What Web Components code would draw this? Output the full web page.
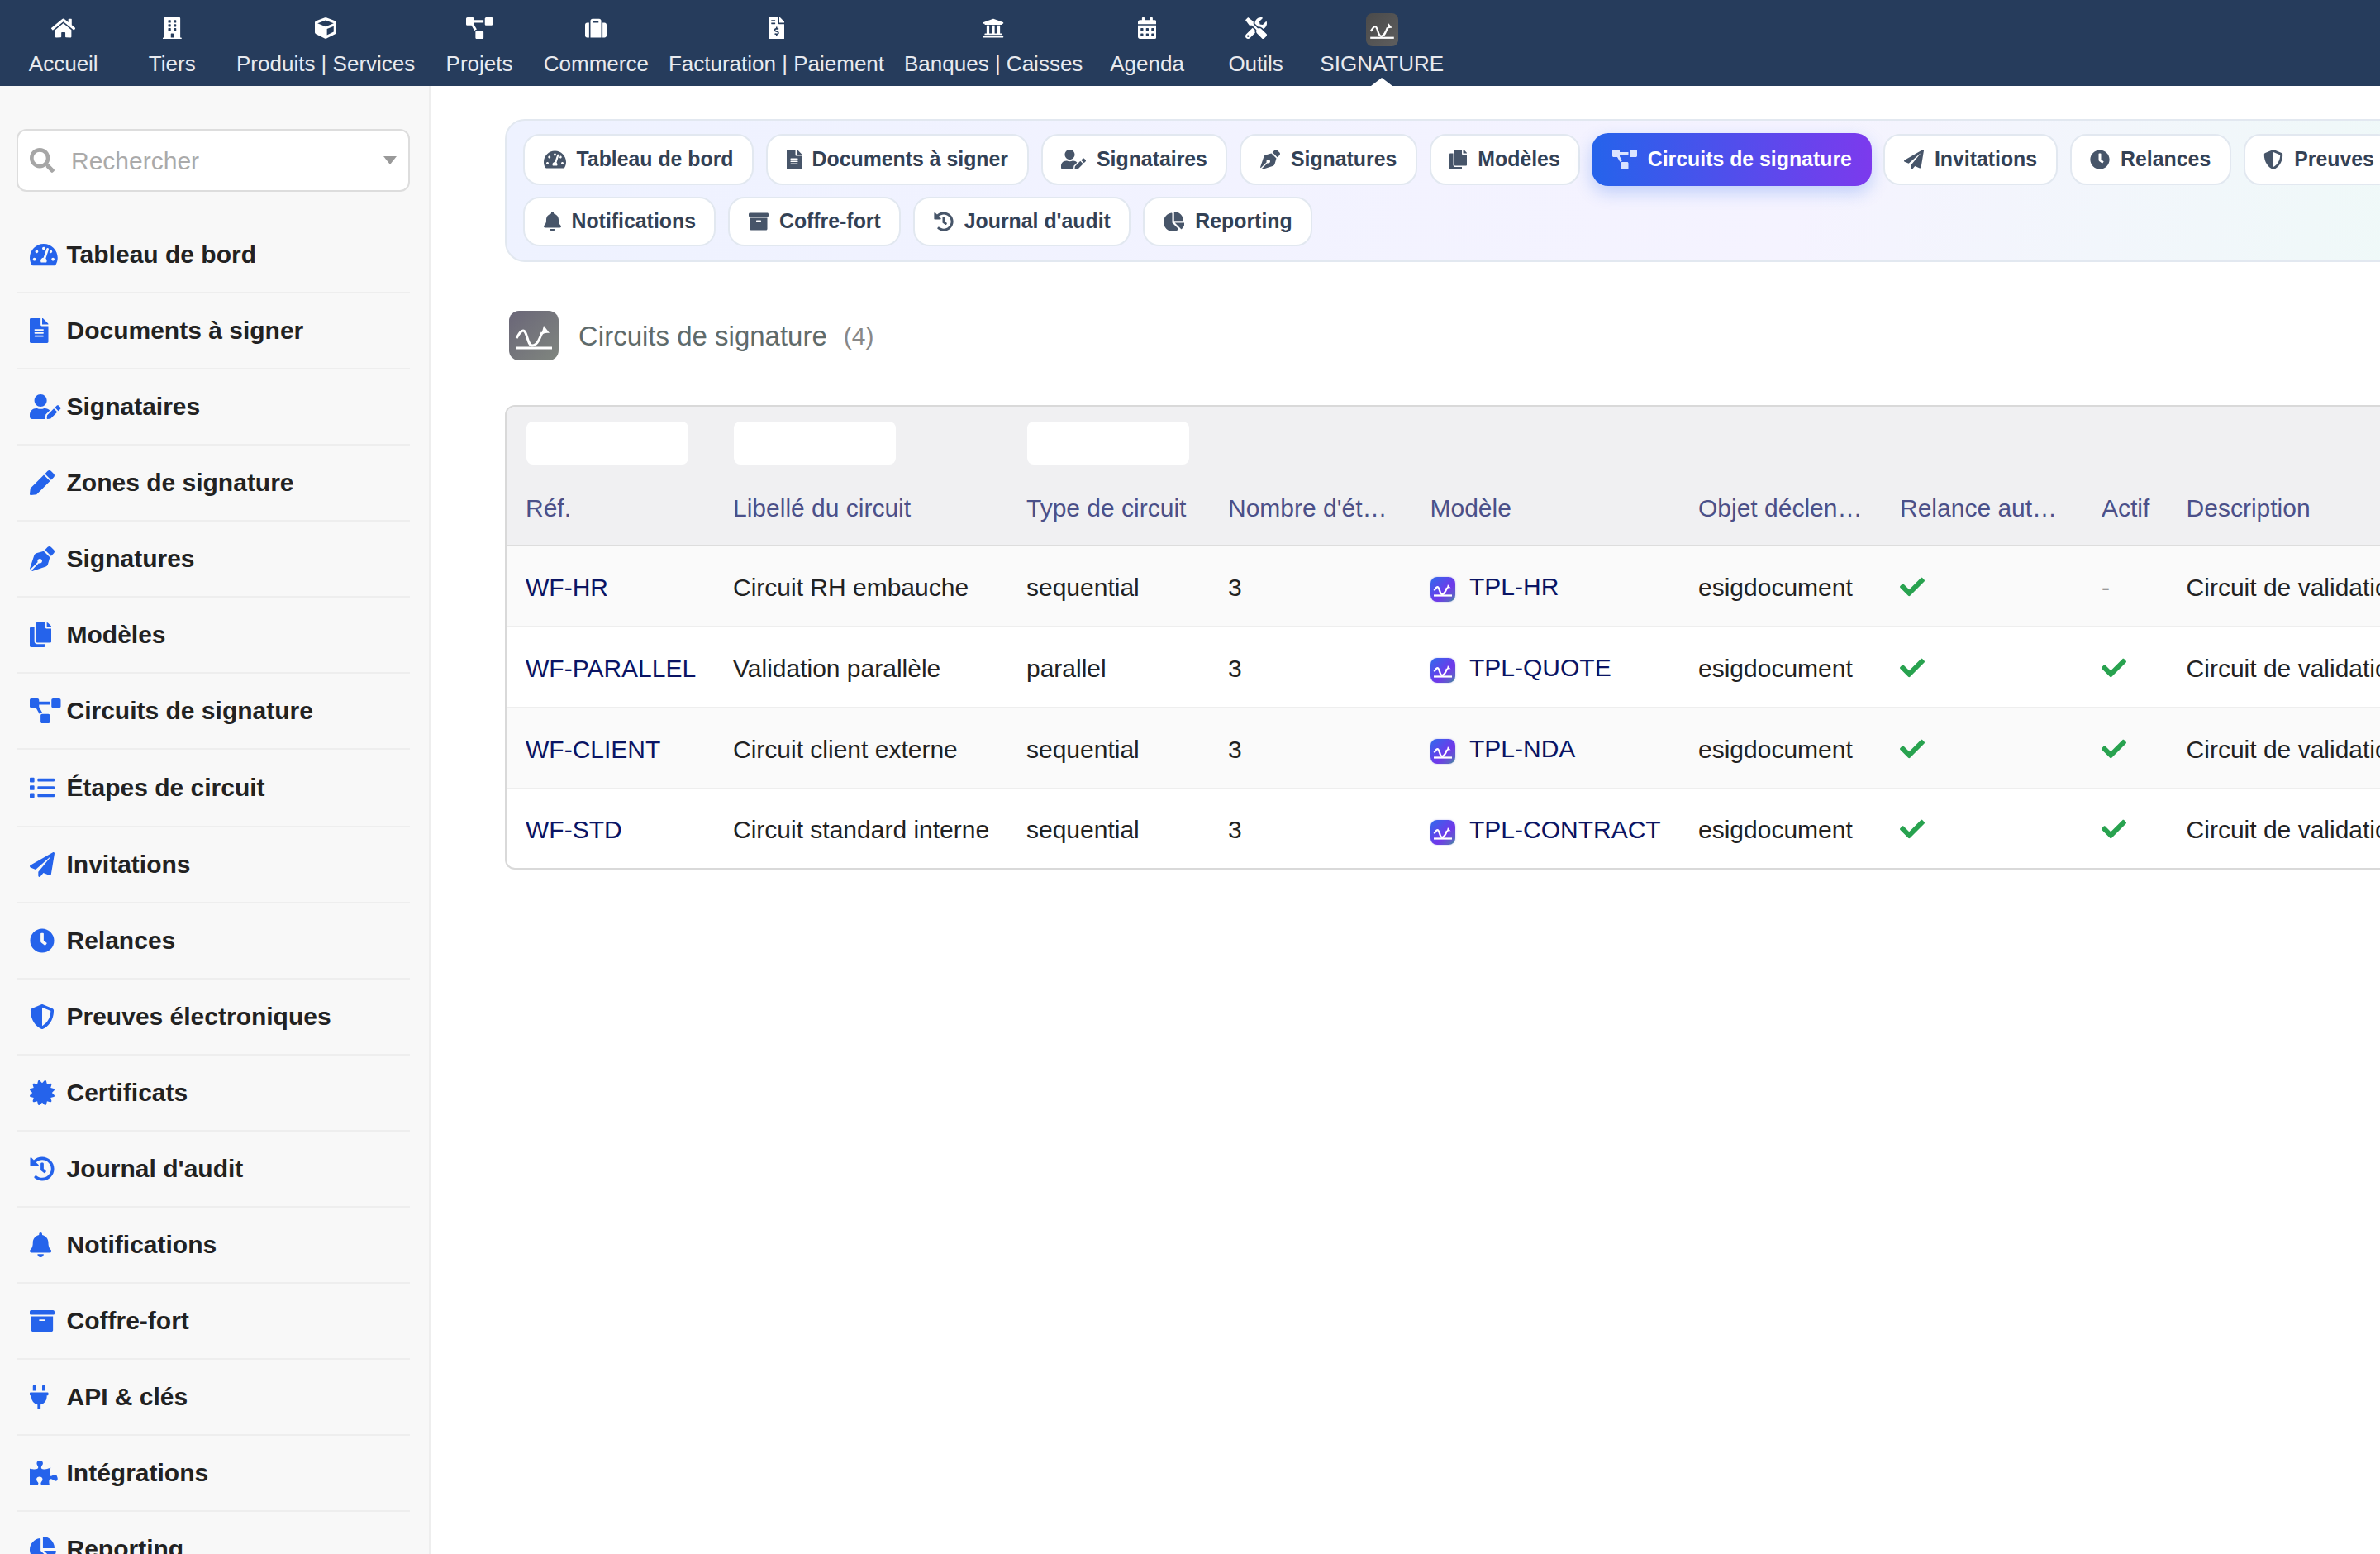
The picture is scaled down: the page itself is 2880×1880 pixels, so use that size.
<!DOCTYPE html>
<html lang="fr">
<head>
<meta charset="utf-8">
<title>Circuits de signature</title>
<style>
  html, body { margin: 0; padding: 0; height: 100%; background: #fff; }
  body { width: 2880px; height: 1880px; overflow: hidden; font-family: "Liberation Sans", Arial, sans-serif; display: flex; flex-direction: column; }
</style>
</head>
<body>
<top-nav>
  <nav-item icon="home">Accueil</nav-item>
  <nav-item icon="building">Tiers</nav-item>
  <nav-item icon="cube">Produits | Services</nav-item>
  <nav-item icon="diagram">Projets</nav-item>
  <nav-item icon="suitcase">Commerce</nav-item>
  <nav-item icon="invoice">Facturation | Paiement</nav-item>
  <nav-item icon="bank">Banques | Caisses</nav-item>
  <nav-item icon="calendar">Agenda</nav-item>
  <nav-item icon="tools">Outils</nav-item>
  <nav-item sign active>SIGNATURE</nav-item>
</top-nav>
<page-body>
  <side-menu>
    <side-item icon="gauge">Tableau de bord</side-item>
    <side-item icon="file">Documents à signer</side-item>
    <side-item icon="useredit">Signataires</side-item>
    <side-item icon="pen">Zones de signature</side-item>
    <side-item icon="nib">Signatures</side-item>
    <side-item icon="copy">Modèles</side-item>
    <side-item icon="diagram">Circuits de signature</side-item>
    <side-item icon="list" tall>Étapes de circuit</side-item>
    <side-item icon="plane">Invitations</side-item>
    <side-item icon="clock">Relances</side-item>
    <side-item icon="shield">Preuves électroniques</side-item>
    <side-item icon="cert">Certificats</side-item>
    <side-item icon="history">Journal d'audit</side-item>
    <side-item icon="bell">Notifications</side-item>
    <side-item icon="archive">Coffre-fort</side-item>
    <side-item icon="plug">API &amp; clés</side-item>
    <side-item icon="puzzle">Intégrations</side-item>
    <side-item icon="pie">Reporting</side-item>
  </side-menu>
  <main-area>
    <tab-strip>
      <tab-pill icon="gauge">Tableau de bord</tab-pill>
      <tab-pill icon="file">Documents à signer</tab-pill>
      <tab-pill icon="useredit">Signataires</tab-pill>
      <tab-pill icon="nib">Signatures</tab-pill>
      <tab-pill icon="copy">Modèles</tab-pill>
      <tab-pill icon="diagram" active>Circuits de signature</tab-pill>
      <tab-pill icon="plane">Invitations</tab-pill>
      <tab-pill icon="clock">Relances</tab-pill>
      <tab-pill icon="shield">Preuves</tab-pill>
      <tab-pill icon="bell" slot="second">Notifications</tab-pill>
      <tab-pill icon="archive" slot="second">Coffre-fort</tab-pill>
      <tab-pill icon="history" slot="second">Journal d'audit</tab-pill>
      <tab-pill icon="pie" slot="second">Reporting</tab-pill>
    </tab-strip>
    <page-title count="(4)">Circuits de signature</page-title>
    <circuit-table></circuit-table>
  </main-area>
</page-body>

<script>
// FontAwesome 5 solid shapes, [width, path], all on a 512 high box
const ICONS = {
  home: [576, 'M280.37 148.26L96 300.11V464a16 16 0 0 0 16 16l112.06-.29a16 16 0 0 0 15.92-16V368a16 16 0 0 1 16-16h64a16 16 0 0 1 16 16v95.64a16 16 0 0 0 16 16.05L464 480a16 16 0 0 0 16-16V300L295.67 148.26a12.19 12.19 0 0 0-15.3 0zM571.6 251.47L488 182.56V44.05a12 12 0 0 0-12-12h-56a12 12 0 0 0-12 12v72.61L318.47 43a48 48 0 0 0-61 0L4.34 251.47a12 12 0 0 0-1.6 16.9l25.5 31A12 12 0 0 0 45.15 301l235.22-193.74a12.19 12.19 0 0 1 15.3 0L530.9 301a12 12 0 0 0 16.9-1.6l25.5-31a12 12 0 0 0-1.7-16.93z'],
  building: [448, 'M436 480h-20V24c0-13.255-10.745-24-24-24H56C42.745 0 32 10.745 32 24v456H12c-6.627 0-12 5.373-12 12v20h448v-20c0-6.627-5.373-12-12-12zM128 76c0-6.627 5.373-12 12-12h40c6.627 0 12 5.373 12 12v40c0 6.627-5.373 12-12 12h-40c-6.627 0-12-5.373-12-12V76zm0 96c0-6.627 5.373-12 12-12h40c6.627 0 12 5.373 12 12v40c0 6.627-5.373 12-12 12h-40c-6.627 0-12-5.373-12-12v-40zm52 148h-40c-6.627 0-12-5.373-12-12v-40c0-6.627 5.373-12 12-12h40c6.627 0 12 5.373 12 12v40c0 6.627-5.373 12-12 12zm76 160h-64v-84c0-6.627 5.373-12 12-12h40c6.627 0 12 5.373 12 12v84zm64-172c0 6.627-5.373 12-12 12h-40c-6.627 0-12-5.373-12-12v-40c0-6.627 5.373-12 12-12h40c6.627 0 12 5.373 12 12v40zm0-96c0 6.627-5.373 12-12 12h-40c-6.627 0-12-5.373-12-12v-40c0-6.627 5.373-12 12-12h40c6.627 0 12 5.373 12 12v40zm0-96c0 6.627-5.373 12-12 12h-40c-6.627 0-12-5.373-12-12V76c0-6.627 5.373-12 12-12h40c6.627 0 12 5.373 12 12v40z'],
  cube: [512, 'M239.1 6.3l-208 78c-18.7 7-31.1 25-31.1 45v225.1c0 18.2 10.3 34.8 26.5 42.9l208 104c13.5 6.8 29.4 6.8 42.9 0l208-104c16.3-8.1 26.5-24.8 26.5-42.9V129.3c0-20-12.4-37.9-31.1-44.9l-208-78C262 2.2 250 2.2 239.1 6.3zM256 68.4l192 72v1.1l-192 78-192-78v-1.1l192-72zm32 356V275.5l160-65v133.9l-160 80z'],
  diagram: [640, 'M384 320H256c-17.67 0-32 14.33-32 32v128c0 17.67 14.33 32 32 32h128c17.67 0 32-14.33 32-32V352c0-17.67-14.33-32-32-32zM192 32c0-17.67-14.33-32-32-32H32C14.33 0 0 14.33 0 32v128c0 17.67 14.33 32 32 32h95.72l73.16 128.04C211.98 300.98 232.4 288 256 288h.28L192 175.51V128h224V64H192V32zM608 0H480c-17.67 0-32 14.33-32 32v128c0 17.67 14.33 32 32 32h128c17.67 0 32-14.33 32-32V32c0-17.67-14.33-32-32-32z'],
  suitcase: [512, 'M128 480h256V80c0-26.5-21.5-48-48-48H176c-26.5 0-48 21.5-48 48v400zm64-384h128v32H192V96zm320 80v256c0 26.5-21.5 48-48 48h-48V128h48c26.5 0 48 21.5 48 48zM96 480H48c-26.5 0-48-21.5-48-48V176c0-26.5 21.5-48 48-48h48v352z'],
  invoice: [384, 'M377 105L279.1 7c-4.5-4.5-10.6-7-17-7H256v128h128v-6.1c0-6.3-2.5-12.4-7-16.9zm-153 31V0H24C10.7 0 0 10.7 0 24v464c0 13.3 10.7 24 24 24h336c13.3 0 24-10.7 24-24V160H248c-13.2 0-24-10.8-24-24zM64 72c0-4.42 3.58-8 8-8h80c4.42 0 8 3.58 8 8v16c0 4.42-3.58 8-8 8H72c-4.42 0-8-3.58-8-8V72zm0 80v-16c0-4.42 3.58-8 8-8h80c4.42 0 8 3.58 8 8v16c0 4.42-3.58 8-8 8H72c-4.42 0-8-3.58-8-8zm144 263.88V440c0 4.42-3.58 8-8 8h-16c-4.42 0-8-3.58-8-8v-24.29c-11.29-.58-22.27-4.52-31.37-11.35-3.9-2.93-4.1-8.77-.57-12.14l11.75-11.21c2.77-2.64 6.89-2.76 10.13-.73 3.87 2.42 8.26 3.72 12.82 3.72h28.11c6.5 0 11.8-5.92 11.8-13.19 0-5.95-3.61-11.19-8.77-12.73l-45-13.5c-18.59-5.58-31.58-23.42-31.58-43.39 0-24.52 19.05-44.44 42.67-45.07V232c0-4.42 3.58-8 8-8h16c4.42 0 8 3.58 8 8v24.29c11.29.58 22.27 4.51 31.37 11.35 3.9 2.93 4.1 8.77.57 12.14l-11.75 11.21c-2.77 2.64-6.89 2.76-10.13.73-3.87-2.43-8.26-3.72-12.82-3.72h-28.11c-6.5 0-11.8 5.92-11.8 13.19 0 5.95 3.61 11.19 8.77 12.73l45 13.5c18.59 5.58 31.58 23.42 31.58 43.39 0 24.53-19.05 44.44-42.67 45.07z'],
  bank: [512, 'M496 128v16a8 8 0 0 1-8 8h-24v12c0 6.627-5.373 12-12 12H60c-6.627 0-12-5.373-12-12v-12H24a8 8 0 0 1-8-8v-16a8 8 0 0 1 4.941-7.392l232-88a7.996 7.996 0 0 1 6.118 0l232 88A8 8 0 0 1 496 128zm-24 304H40c-13.255 0-24 10.745-24 24v16a8 8 0 0 0 8 8h464a8 8 0 0 0 8-8v-16c0-13.255-10.745-24-24-24zM96 192v192H60c-6.627 0-12 5.373-12 12v20h416v-20c0-6.627-5.373-12-12-12h-36V192h-64v192h-64V192h-64v192h-64V192H96z'],
  calendar: [448, 'M0 464c0 26.5 21.5 48 48 48h352c26.5 0 48-21.5 48-48V192H0v272zm320-196c0-6.6 5.4-12 12-12h40c6.6 0 12 5.4 12 12v40c0 6.6-5.4 12-12 12h-40c-6.6 0-12-5.4-12-12v-40zm0 128c0-6.6 5.4-12 12-12h40c6.6 0 12 5.4 12 12v40c0 6.6-5.4 12-12 12h-40c-6.6 0-12-5.4-12-12v-40zM192 268c0-6.6 5.4-12 12-12h40c6.6 0 12 5.4 12 12v40c0 6.6-5.4 12-12 12h-40c-6.6 0-12-5.4-12-12v-40zm0 128c0-6.6 5.4-12 12-12h40c6.6 0 12 5.4 12 12v40c0 6.6-5.4 12-12 12h-40c-6.6 0-12-5.4-12-12v-40zM64 268c0-6.6 5.4-12 12-12h40c6.6 0 12 5.4 12 12v40c0 6.6-5.4 12-12 12H76c-6.6 0-12-5.4-12-12v-40zm0 128c0-6.6 5.4-12 12-12h40c6.6 0 12 5.4 12 12v40c0 6.6-5.4 12-12 12H76c-6.6 0-12-5.4-12-12v-40zM400 64h-48V16c0-8.8-7.2-16-16-16h-32c-8.8 0-16 7.2-16 16v48H160V16c0-8.8-7.2-16-16-16h-32c-8.8 0-16 7.2-16 16v48H48C21.5 64 0 85.5 0 112v48h448v-48c0-26.5-21.5-48-48-48z'],
  tools: [512, 'M501.1 395.7L384 278.6c-23.1-23.1-57.6-27.6-85.4-13.9L192 158.1V96L64 0 0 64l96 128h62.1l106.6 106.6c-13.6 27.8-9.2 62.3 13.9 85.4l117.1 117.1c14.6 14.6 38.2 14.6 52.7 0l52.7-52.7c14.5-14.6 14.5-38.2 0-52.7zM331.7 225c28.3 0 54.9 11 74.9 31l19.4 19.4c15.8-6.9 30.8-16.5 43.8-29.5 37.1-37.1 49.7-89.3 37.9-136.7-2.2-9-13.5-12.1-20.1-5.5l-74.4 74.4-67.9-11.3L334 98.9l74.4-74.4c6.6-6.6 3.4-17.9-5.7-20.2-47.4-11.7-99.6.9-136.6 37.9-28.5 28.5-41.9 66.1-41.2 103.6l82.1 82.1c8.1-1.9 16.5-2.9 24.7-2.9zm-103.9 82l-56.7-56.7L18.7 402.8c-25 25-25 65.5 0 90.5s65.5 25 90.5 0l123.6-123.6c-7.6-19.9-9.9-41.6-5-62.7zM64 472c-13.2 0-24-10.8-24-24 0-13.3 10.7-24 24-24s24 10.7 24 24c0 13.2-10.7 24-24 24z'],
  gauge: [576, 'M288 32C128.94 32 0 160.94 0 320c0 52.8 14.25 102.26 39.06 144.8 5.61 9.62 16.3 15.2 27.44 15.2h443c11.14 0 21.83-5.58 27.44-15.2C561.75 422.26 576 372.8 576 320c0-159.06-128.94-288-288-288zm0 64c14.71 0 26.58 10.13 30.32 23.65-1.11 2.26-2.64 4.23-3.45 6.67l-9.22 27.67c-5.13 3.49-10.97 6.01-17.64 6.01-17.67 0-32-14.33-32-32S270.33 96 288 96zM96 384c-17.67 0-32-14.33-32-32s14.33-32 32-32 32 14.33 32 32-14.33 32-32 32zm48-160c-17.67 0-32-14.33-32-32s14.33-32 32-32 32 14.33 32 32-14.33 32-32 32zm246.77-72.41l-61.33 184C343.13 347.33 352 364.54 352 384c0 11.72-3.38 22.55-8.88 32H232.88c-5.5-9.45-8.88-20.28-8.88-32 0-33.94 26.5-61.43 59.9-63.59l61.34-184.01c4.17-12.56 17.73-19.45 30.36-15.17 12.57 4.19 19.35 17.79 15.17 30.36zm14.66 57.2l15.52-46.55c3.47-1.29 7.13-2.23 11.05-2.23 17.67 0 32 14.33 32 32s-14.33 32-32 32c-11.38-.01-20.89-6.28-26.57-15.22zM480 384c-17.67 0-32-14.33-32-32s14.33-32 32-32 32 14.33 32 32-14.33 32-32 32z'],
  file: [384, 'M224 136V0H24C10.7 0 0 10.7 0 24v464c0 13.3 10.7 24 24 24h336c13.3 0 24-10.7 24-24V160H248c-13.2 0-24-10.8-24-24zm64 236c0 6.6-5.4 12-12 12H108c-6.6 0-12-5.4-12-12v-8c0-6.6 5.4-12 12-12h168c6.6 0 12 5.4 12 12v8zm0-64c0 6.6-5.4 12-12 12H108c-6.6 0-12-5.4-12-12v-8c0-6.6 5.4-12 12-12h168c6.6 0 12 5.4 12 12v8zm0-72v8c0 6.6-5.4 12-12 12H108c-6.6 0-12-5.4-12-12v-8c0-6.6 5.4-12 12-12h168c6.6 0 12 5.4 12 12zm96-114.1v6.1H256V0h6.1c6.4 0 12.5 2.5 17 7l97.9 98c4.5 4.5 7 10.6 7 16.9z'],
  useredit: [640, 'M224 256c70.7 0 128-57.3 128-128S294.7 0 224 0 96 57.3 96 128s57.3 128 128 128zm89.6 32h-16.7c-22.2 10.2-46.9 16-72.9 16s-50.6-5.8-72.9-16h-16.7C60.2 288 0 348.2 0 422.4V464c0 26.5 21.5 48 48 48h274.9c-2.4-6.8-3.4-14-2.6-21.3l6.8-60.9 1.2-11.1 7.9-7.9 77.3-77.3c-24.5-27.7-60-45.5-99.9-45.5zm45.3 145.3l-6.8 61c-1.1 10.2 7.5 18.8 17.6 17.6l60.9-6.8 137.9-137.9-71.7-71.7-137.9 137.8zM633 268.9L595.1 231c-9.3-9.3-24.5-9.3-33.8 0l-37.8 37.8-4.1 4.1 71.8 71.7 41.8-41.8c9.3-9.4 9.3-24.5 0-33.9z'],
  pen: [512, 'M290.74 93.24l128.02 128.02-277.99 277.99-114.14 12.6C11.35 513.54-1.56 500.62.14 485.34l12.7-114.22 277.9-277.88zm207.2-19.06l-60.11-60.11c-18.75-18.75-49.16-18.75-67.91 0l-56.55 56.55 128.02 128.02 56.55-56.55c18.75-18.76 18.75-49.16 0-67.91z'],
  nib: [512, 'M136.6 138.79a64.003 64.003 0 0 0-43.31 41.35L0 460l14.69 14.69L164.8 324.58c-2.99-6.26-4.8-13.18-4.8-20.58 0-26.51 21.49-48 48-48s48 21.49 48 48-21.49 48-48 48c-7.4 0-14.32-1.81-20.58-4.8L37.31 497.31 52 512l279.86-93.29a64.003 64.003 0 0 0 41.35-43.31L416 224 288 96l-151.4 42.79zm361.34-64.62l-60.11-60.11c-18.75-18.75-49.16-18.75-67.91 0l-56.55 56.55 128.02 128.02 56.55-56.55c18.75-18.75 18.75-49.15 0-67.91z'],
  copy: [448, 'M320 448v40c0 13.255-10.745 24-24 24H24c-13.255 0-24-10.745-24-24V120c0-13.255 10.745-24 24-24h72v296c0 30.879 25.121 56 56 56h168zm0-344V0H152c-13.255 0-24 10.745-24 24v368c0 13.255 10.745 24 24 24h272c13.255 0 24-10.745 24-24V128H344c-13.2 0-24-10.8-24-24zm120.971-31.029L375.029 7.029A24 24 0 0 0 358.059 0H352v96h96v-6.059a24 24 0 0 0-7.029-16.97z'],
  list: [512, 'M80 368H16a16 16 0 0 0-16 16v64a16 16 0 0 0 16 16h64a16 16 0 0 0 16-16v-64a16 16 0 0 0-16-16zm0-320H16A16 16 0 0 0 0 64v64a16 16 0 0 0 16 16h64a16 16 0 0 0 16-16V64a16 16 0 0 0-16-16zm0 160H16a16 16 0 0 0-16 16v64a16 16 0 0 0 16 16h64a16 16 0 0 0 16-16v-64a16 16 0 0 0-16-16zm416 176H176a16 16 0 0 0-16 16v32a16 16 0 0 0 16 16h320a16 16 0 0 0 16-16v-32a16 16 0 0 0-16-16zm0-320H176a16 16 0 0 0-16 16v32a16 16 0 0 0 16 16h320a16 16 0 0 0 16-16V80a16 16 0 0 0-16-16zm0 160H176a16 16 0 0 0-16 16v32a16 16 0 0 0 16 16h320a16 16 0 0 0 16-16v-32a16 16 0 0 0-16-16z'],
  plane: [512, 'M476 3.2L12.5 270.6c-18.1 10.4-15.8 35.6 2.2 43.2L121 358.4l287.3-253.2c5.5-4.9 13.3 2.6 8.6 8.3L176 407v80.5c0 23.6 28.5 32.9 42.5 15.8L282 426l124.6 52.2c14.2 6 30.4-2.9 33-18.2l72-432C515 7.8 493.3-6.8 476 3.2z'],
  clock: [512, 'M256,8C119,8,8,119,8,256S119,504,256,504,504,393,504,256,393,8,256,8Zm92.49,313h0l-20,25a16,16,0,0,1-22.49,2.5h0l-67-49.72a40,40,0,0,1-15-31.23V112a16,16,0,0,1,16-16h32a16,16,0,0,1,16,16V256l58,42.5A16,16,0,0,1,348.49,321Z'],
  shield: [512, 'M466.5 83.7l-192-80a48.15 48.15 0 0 0-36.9 0l-192 80C27.7 91.1 16 108.6 16 128c0 198.5 114.5 335.7 221.5 380.3 11.8 4.9 25.1 4.9 36.9 0C360.1 472.6 496 349.3 496 128c0-19.4-11.7-36.9-29.5-44.3zM256.1 446.3l-.1-381 175.9 73.3c-3.3 151.4-82.1 261.1-175.8 307.7z'],
  cert: [512, 'M458.622 255.92l45.985-45.005c13.708-12.977 7.316-36.039-10.664-40.339l-62.65-15.99 17.661-62.015c4.991-17.838-11.829-34.663-29.661-29.671l-61.994 17.667-15.984-62.671C337.085.197 313.765-6.276 300.99 7.228L256 53.57 211.011 7.229c-12.63-13.351-36.047-7.234-40.325 10.668l-15.984 62.671-61.995-17.667C74.87 57.907 58.056 74.738 63.046 92.572l17.661 62.015-62.65 15.99C.069 174.878-6.31 197.944 7.392 210.915l45.985 45.005-45.985 45.004c-13.708 12.977-7.316 36.039 10.664 40.339l62.65 15.99-17.661 62.015c-4.991 17.838 11.829 34.663 29.661 29.671l61.994-17.667 15.984 62.671c4.439 18.575 27.696 24.018 40.325 10.668L256 458.61l44.989 46.001c12.5 13.488 35.987 7.486 40.325-10.668l15.984-62.671 61.994 17.667c17.836 4.994 34.651-11.837 29.661-29.671l-17.661-62.015 62.65-15.99c17.987-4.302 24.366-27.367 10.664-40.339l-45.984-45.004z'],
  history: [512, 'M504 255.531c.253 136.64-111.18 248.372-247.82 248.468-59.015.042-113.223-20.53-155.822-54.911-11.077-8.94-11.905-25.541-1.839-35.607l11.267-11.267c8.609-8.609 22.353-9.551 31.891-1.984C173.062 425.135 212.781 440 256 440c101.705 0 184-82.311 184-184 0-101.705-82.311-184-184-184-48.814 0-93.149 18.969-126.068 49.932l50.754 50.754c10.08 10.08 2.941 27.314-11.313 27.314H24c-8.837 0-16-7.163-16-16V38.627c0-14.254 17.234-21.393 27.314-11.314l49.372 49.372C129.209 34.136 189.552 8 256 8c136.81 0 247.747 110.78 248 247.531zm-180.912 78.784l9.823-12.63c8.138-10.463 6.253-25.542-4.21-33.679L288 256.349V152c0-13.255-10.745-24-24-24h-16c-13.255 0-24 10.745-24 24v135.651l65.409 50.874c10.463 8.137 25.541 6.253 33.679-4.21z'],
  bell: [448, 'M224 512c35.32 0 63.97-28.65 63.97-64H160.03c0 35.35 28.65 64 63.97 64zm215.39-149.71c-19.32-20.76-55.47-51.99-55.47-154.29 0-77.7-54.48-139.9-127.94-155.16V32c0-17.67-14.32-32-31.98-32s-31.98 14.33-31.98 32v20.84C118.56 68.1 64.08 130.3 64.08 208c0 102.3-36.15 133.53-55.47 154.29-6 6.45-8.66 14.16-8.61 21.71.11 16.4 12.98 32 32.1 32h383.8c19.12 0 32-15.6 32.1-32 .05-7.55-2.61-15.27-8.61-21.71z'],
  archive: [512, 'M32 448c0 17.7 14.3 32 32 32h384c17.7 0 32-14.3 32-32V160H32v288zm160-212c0-6.6 5.4-12 12-12h104c6.6 0 12 5.4 12 12v8c0 6.6-5.4 12-12 12H204c-6.6 0-12-5.4-12-12v-8zM480 32H32C14.3 32 0 46.3 0 64v48c0 8.8 7.2 16 16 16h480c8.8 0 16-7.2 16-16V64c0-17.7-14.3-32-32-32z'],
  plug: [384, 'M320,32a32,32,0,0,0-64,0v96h64Zm48,128H16A16,16,0,0,0,0,176v32a16,16,0,0,0,16,16H32v32A160.07,160.07,0,0,0,160,412.8V512h64V412.8A160.07,160.07,0,0,0,352,256V224h16a16,16,0,0,0,16-16V176A16,16,0,0,0,368,160ZM128,32a32,32,0,0,0-64,0v96h64Z'],
  puzzle: [576, 'M519.442 288.651c-41.519 0-59.5 31.593-82.058 31.593C377.409 320.244 432 144 432 144s-196.288 80-196.288-3.297c0-35.827 36.288-46.25 36.288-85.985C272 19.216 243.885 0 210.539 0c-34.654 0-66.366 18.891-66.366 56.346 0 41.364 31.711 59.277 31.711 81.75C175.885 207.719 0 166.758 0 166.758v333.237s178.635 41.047 178.635-28.662c0-22.473-40-40.107-40-81.471 0-37.456 29.25-56.346 63.577-56.346 33.673 0 61.788 19.216 61.788 54.717 0 39.735-36.288 50.158-36.288 85.985 0 60.803 129.675 25.73 181.23 25.73 0 0-34.725-120.101 25.827-120.101 35.962 0 46.222 36.152 86.002 36.152C544.712 433.999 576 409.887 576 376.54c0-34.654-18.891-87.889-56.558-87.889z'],
  pie: [544, 'M527.79 288H290.5l158.03 158.03c6.04 6.04 15.98 6.53 22.19.68 38.7-36.46 65.32-85.61 73.13-140.86 1.34-9.46-6.51-17.85-16.06-17.85zm-15.83-64.8C503.72 103.74 408.26 8.28 288.8.04 279.68-.59 272 7.1 272 16.24V240h223.77c9.14 0 16.82-7.68 16.19-16.8zM224 288V50.71c0-9.55-8.39-17.4-17.84-16.06C86.99 51.49-4.1 155.6.14 280.37 4.5 408.51 114.83 513.59 243.03 511.98c50.4-.63 96.97-16.87 135.26-44.03 7.9-5.6 8.42-17.23 1.57-24.08L224 288z'],
  search: [512, 'M505 442.7L405.3 343c-4.5-4.5-10.6-7-17-7H372c27.6-35.3 44-79.7 44-128C416 93.1 322.9 0 208 0S0 93.1 0 208s93.1 208 208 208c48.3 0 92.7-16.4 128-44v16.3c0 6.4 2.5 12.5 7 17l99.7 99.7c9.4 9.4 24.6 9.4 33.9 0l28.3-28.3c9.4-9.4 9.4-24.6.1-34zM208 336c-70.7 0-128-57.2-128-128 0-70.7 57.2-128 128-128 70.7 0 128 57.2 128 128 0 70.7-57.2 128-128 128z'],
  check: [512, 'M173.898 439.404l-166.4-166.4c-9.997-9.997-9.997-26.206 0-36.204l36.203-36.204c9.997-9.998 26.207-9.998 36.204 0L192 312.69 432.095 72.596c9.997-9.997 26.207-9.997 36.204 0l36.203 36.204c9.997 9.997 9.997 26.206 0 36.204l-294.4 294.401c-9.998 9.997-26.207 9.997-36.204-.001z']
};

class FaIcon extends HTMLElement {
  connectedCallback() {
    const [w, d] = ICONS[this.getAttribute('name')];
    this.attachShadow({ mode: 'open' });
    this.shadowRoot.innerHTML = `
      <style>
        :host { display: inline-flex; flex: none; line-height: 0; }
        svg { height: var(--icon-size, 1em); width: auto; fill: currentColor; display: block; }
      </style>
      <svg viewBox="0 0 ${w} 512"><path d="${d}"/></svg>`;
  }
}
customElements.define('fa-icon', FaIcon);

// the signature mark used for the module, the page title and the template cells
class SignMark extends HTMLElement {
  constructor() {
    super();
    this.attachShadow({ mode: 'open' });
    this.shadowRoot.innerHTML = `
      <style>
        :host { display: inline-flex; flex: none; width: 60px; height: 60px; border-radius: 20%; background: linear-gradient(135deg, #6a6678, #80867f); }
        svg { width: 100%; height: 100%; display: block; }
        .s { stroke-width: var(--mark-stroke, 3); }
      </style>
      <svg viewBox="0 0 60 60" fill="none" stroke="#fff">
        <path class="s" d="M8 45H52"/>
        <path class="s" d="M9 33C12 28 14 24 17 24C22 24 22 42 28 42C34 42 37 34 40 26"/>
        <path d="M42 18L49 27C45 26 42 27 38 30C40 26 41 22 42 18Z" fill="#fff" stroke="none"/>
      </svg>`;
  }
}
customElements.define('sign-mark', SignMark);

class TopNav extends HTMLElement {
  constructor() {
    super();
    this.attachShadow({ mode: 'open' });
    this.shadowRoot.innerHTML = `
      <style>
        :host { display: flex; flex: none; height: 104px; padding-left: 11px; background: #263c5c; }
      </style>
      <slot></slot>`;
  }
}
customElements.define('top-nav', TopNav);

class NavItem extends HTMLElement {
  connectedCallback() {
    const sign = this.hasAttribute('sign');
    const icon = sign ? '<sign-mark class="sm"></sign-mark>' : `<fa-icon name="${this.getAttribute('icon')}"></fa-icon>`;
    this.attachShadow({ mode: 'open' });
    this.shadowRoot.innerHTML = `
      <style>
        :host { position: relative; display: flex; flex-direction: column; align-items: center; box-sizing: border-box; min-width: 131.5px; padding: 14px 12px 0; color: #e8eaef; font-size: 26px; white-space: nowrap; }
        .ic { height: 40px; display: flex; align-items: center; justify-content: center; color: #fff; --icon-size: 26px; }
        .sm { width: 39px; height: 40px; margin-top: 4px; background: linear-gradient(135deg, #4a4a4a, #5e5e5e); --mark-stroke: 3.5; }
        .lb { margin-top: 6px; line-height: 34px; }
        :host([active])::after { content: ""; position: absolute; left: 50%; bottom: 0; margin-left: -13px; border: 13px solid transparent; border-top: 0; border-bottom: 10px solid #fff; }
      </style>
      <div class="ic">${icon}</div>
      <div class="lb"><slot></slot></div>`;
  }
}
customElements.define('nav-item', NavItem);

class PageBody extends HTMLElement {
  constructor() {
    super();
    this.attachShadow({ mode: 'open' });
    this.shadowRoot.innerHTML = `
      <style>
        :host { display: flex; flex: 1; min-height: 0; overflow: hidden; }
      </style>
      <slot></slot>`;
  }
}
customElements.define('page-body', PageBody);

class SideMenu extends HTMLElement {
  constructor() {
    super();
    this.attachShadow({ mode: 'open' });
    this.shadowRoot.innerHTML = `
      <style>
        :host { display: block; flex: none; box-sizing: border-box; width: 521px; padding: 52px 23px 0 20px; background: #f8f8f8; border-right: 2px solid #eee; overflow: hidden; }
        .search { display: flex; align-items: center; box-sizing: border-box; height: 76px; margin-bottom: 31px; padding: 0 14px; background: #fff; border: 2px solid #ddd; border-radius: 12px; color: #aaa; font-size: 30px; }
        .search fa-icon { margin-right: 20px; color: #a6a6a6; }
        .search span { flex: 1; padding-top: 2px; }
        .arrow { width: 0; height: 0; border: 8px solid transparent; border-top: 10px solid #999; border-bottom: 0; }
      </style>
      <div class="search"><fa-icon name="search"></fa-icon><span>Rechercher</span><i class="arrow"></i></div>
      <slot></slot>`;
  }
}
customElements.define('side-menu', SideMenu);

class SideItem extends HTMLElement {
  connectedCallback() {
    this.attachShadow({ mode: 'open' });
    this.shadowRoot.innerHTML = `
      <style>
        :host { display: flex; align-items: center; box-sizing: border-box; height: 92px; padding-left: 16px; border-bottom: 2px solid #eee; color: #222; font-size: 30px; font-weight: 700; white-space: nowrap; }
        :host([tall]) { height: 94px; }
        .ic { width: 44.5px; flex: none; display: flex; color: #2563eb; }
      </style>
      <span class="ic"><fa-icon name="${this.getAttribute('icon')}"></fa-icon></span>
      <slot></slot>`;
  }
}
customElements.define('side-item', SideItem);

class MainArea extends HTMLElement {
  constructor() {
    super();
    this.attachShadow({ mode: 'open' });
    this.shadowRoot.innerHTML = `
      <style>
        :host { display: block; flex: 1; min-width: 0; padding: 40px 0 0 90px; overflow: hidden; background: #fff; }
      </style>
      <slot></slot>`;
  }
}
customElements.define('main-area', MainArea);

class TabStrip extends HTMLElement {
  constructor() {
    super();
    this.attachShadow({ mode: 'open' });
    this.shadowRoot.innerHTML = `
      <style>
        :host { display: block; box-sizing: border-box; width: 2400px; height: 173px; padding: 16px 20px; border: 2px solid #e2e8f0; border-radius: 24px; background: linear-gradient(100deg, #eef2ff 0%, #f5f3ff 65%, #eff9f8 96%); }
        .row { display: flex; gap: 15px; align-items: center; white-space: nowrap; }
        .row + .row { margin-top: 14px; --pill-h: 60px; }
      </style>
      <div class="row"><slot></slot></div>
      <div class="row"><slot name="second"></slot></div>`;
  }
}
customElements.define('tab-strip', TabStrip);

class TabPill extends HTMLElement {
  connectedCallback() {
    this.attachShadow({ mode: 'open' });
    this.shadowRoot.innerHTML = `
      <style>
        :host { display: inline-flex; align-items: center; gap: 13px; flex: none; box-sizing: border-box; height: var(--pill-h, 62px); padding: 0 22.5px; background: #fff; border: 2px solid #e2e8f0; border-radius: 20px; color: #334155; font-size: 24.85px; font-weight: 700; }
        fa-icon { color: #475569; --icon-size: 24px; }
        :host([active]) { height: 64px; margin: -1px; padding: 0 22.5px; background: linear-gradient(90deg, #2563eb, #7c3aed); border-color: transparent; background-origin: border-box; color: #fff; box-shadow: 0 8px 20px rgba(37, 99, 235, .25); }
        :host([active]) fa-icon { color: #dbe4ff; }
      </style>
      <fa-icon name="${this.getAttribute('icon')}"></fa-icon>
      <slot></slot>`;
  }
}
customElements.define('tab-pill', TabPill);

class PageTitle extends HTMLElement {
  connectedCallback() {
    this.attachShadow({ mode: 'open' });
    this.shadowRoot.innerHTML = `
      <style>
        :host { display: flex; align-items: center; height: 60px; margin: 59px 0 54px 5px; color: #5f6b6b; font-size: 33px; white-space: nowrap; }
        sign-mark { margin-right: 24px; }
        .t { padding-top: 2px; }
        .n { margin-left: 20px; padding-top: 2px; color: #888; font-size: 30px; }
      </style>
      <sign-mark></sign-mark>
      <span class="t"><slot></slot></span>
      <span class="n">${this.getAttribute('count')}</span>`;
  }
}
customElements.define('page-title', PageTitle);

class CircuitTable extends HTMLElement {
  constructor() {
    super();
    const cols = [
      ['Réf.', 250, true], ['Libellé du circuit', 355, true], ['Type de circuit', 244, true],
      ["Nombre d'étapes", 244.5], ['Modèle', 324.5], ['Objet déclencheur', 244],
      ['Relance automatique', 244], ['Actif', 102.6], ['Description', 600]
    ];
    const rows = [
      ['WF-HR', 'Circuit RH embauche', 'sequential', 'TPL-HR', false],
      ['WF-PARALLEL', 'Validation parallèle', 'parallel', 'TPL-QUOTE', true],
      ['WF-CLIENT', 'Circuit client externe', 'sequential', 'TPL-NDA', true],
      ['WF-STD', 'Circuit standard interne', 'sequential', 'TPL-CONTRACT', true]
    ];
    const ok = '<fa-icon class="ok" name="check"></fa-icon>';
    const body = rows.map(r => `
      <tr>
        <td><a>${r[0]}</a></td>
        <td>${r[1]}</td>
        <td>${r[2]}</td>
        <td>3</td>
        <td><sign-mark class="tpl"></sign-mark><a>${r[3]}</a></td>
        <td>esigdocument</td>
        <td>${ok}</td>
        <td>${r[4] ? ok : '<span class="no">-</span>'}</td>
        <td>Circuit de validation</td>
      </tr>`).join('');
    this.attachShadow({ mode: 'open' });
    this.shadowRoot.innerHTML = `
      <style>
        :host { display: block; box-sizing: border-box; width: 2640px; border: 2px solid #d9d9d9; border-right: 0; border-radius: 12px 0 0 12px; overflow: hidden; font-size: 30px; }
        table { border-collapse: collapse; table-layout: fixed; width: 2606.6px; }
        th, td { padding: 0 0 0 24px; text-align: left; font-weight: 400; overflow: hidden; white-space: nowrap; text-overflow: ellipsis; }
        th:first-child, td:first-child { padding-left: 23px; }
        th { padding-right: 20px; }
        th:nth-child(8) { padding-right: 0; }
        thead { background: #f0f0f2; color: #4b5089; }
        .filters th { height: 78px; vertical-align: top; padding-top: 18px; box-sizing: border-box; }
        .labels th { height: 90px; vertical-align: middle; box-sizing: border-box; border-bottom: 2px solid #ddd; }
        input { display: block; width: 196px; height: 52px; margin: 0 0 0 1px; padding: 0; border: 0; border-radius: 8px; background: #fff; }
        td { height: 98px; box-sizing: border-box; color: #222; border-bottom: 2px solid #eee; padding-top: 3px; }
        tbody tr:nth-child(odd) { background: #fafafa; }
        tbody tr:last-child td { height: 96px; border-bottom: 0; }
        a { color: #0a1464; }
        .tpl { width: 30px; height: 30px; margin-right: 17.5px; vertical-align: -8px; border-radius: 8px; background: linear-gradient(135deg, #2f6bec 0%, #7038ea 60%, #5f62c8 85%, #2e9d80 100%); box-shadow: 0 0 2px rgba(120, 110, 230, .5); --mark-stroke: 4.5; }
        .ok { color: #28a24f; vertical-align: middle; margin-bottom: 4px; }
        .no { color: #999; }
      </style>
      <table>
        <colgroup>${cols.map(c => `<col style="width:${c[1]}px">`).join('')}</colgroup>
        <thead>
          <tr class="filters">${cols.map(c => `<th>${c[2] ? '<input type="text">' : ''}</th>`).join('')}</tr>
          <tr class="labels">${cols.map(c => `<th>${c[0]}</th>`).join('')}</tr>
        </thead>
        <tbody>${body}</tbody>
      </table>`;
  }
}
customElements.define('circuit-table', CircuitTable);
</script>
</body>
</html>
